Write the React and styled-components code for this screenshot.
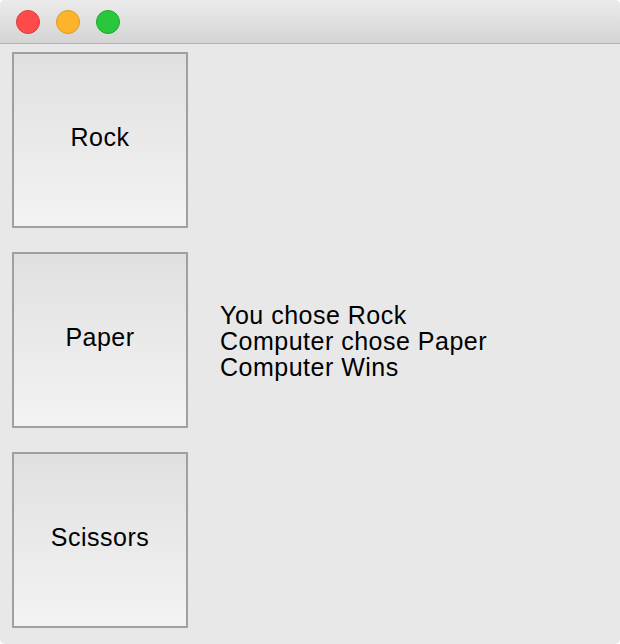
import styled, { createGlobalStyle } from 'styled-components';

const GlobalStyle = createGlobalStyle`
  html, body {
    margin: 0;
    padding: 0;
    background: #ffffff;
    font-family: "Liberation Sans", Arial, sans-serif;
  }
`;

const Window = styled.div`
  width: 620px;
  height: 644px;
  background: #e8e8e8;
  border-radius: 5px;
  overflow: hidden;
  display: flex;
  flex-direction: column;
`;

const TitleBar = styled.div`
  height: 43px;
  flex-shrink: 0;
  background: linear-gradient(to bottom, #ebebeb, #d4d4d4);
  border-bottom: 1px solid #b1b1b1;
  display: flex;
  align-items: center;
  gap: 16px;
  padding-left: 16px;
  box-sizing: content-box;
`;

const Light = styled.span`
  width: 22px;
  height: 22px;
  border-radius: 50%;
  background: ${(p) => p.$color};
  border: 1px solid ${(p) => p.$edge};
`;

const Content = styled.div`
  flex: 1;
  display: flex;
  align-items: center;
  padding: 8px 12px 0;
`;

const ButtonColumn = styled.div`
  display: flex;
  flex-direction: column;
  gap: 24px;
  align-self: flex-start;
`;

const ChoiceButton = styled.button`
  width: 176px;
  height: 176px;
  box-sizing: border-box;
  border: 2px solid #a0a0a0;
  background: linear-gradient(to bottom, #e0e0e0, #f3f3f3);
  font-family: "Liberation Sans", Arial, sans-serif;
  font-size: 25px;
  letter-spacing: 0.5px;
  color: #000;
  padding: 0 0 6px;
  cursor: pointer;
`;

const Result = styled.div`
  margin-left: 32px;
  margin-top: -14px;
  font-size: 25px;
  letter-spacing: 0.5px;
  line-height: 26px;
  color: #000;
`;

const App = () => {
  const choices = ['Rock', 'Paper', 'Scissors'];

  return (
    <>
      <GlobalStyle />
      <Window>
        <TitleBar>
          <Light $color="#fd4b4b" $edge="#e03a3a" />
          <Light $color="#fdb42a" $edge="#df9a1c" />
          <Light $color="#28c73c" $edge="#1fa92f" />
        </TitleBar>
        <Content>
          <ButtonColumn>
            {choices.map((c) => (
              <ChoiceButton key={c}>{c}</ChoiceButton>
            ))}
          </ButtonColumn>
          <Result>
            <div>You chose Rock</div>
            <div>Computer chose Paper</div>
            <div>Computer Wins</div>
          </Result>
        </Content>
      </Window>
    </>
  );
};

export default App;
